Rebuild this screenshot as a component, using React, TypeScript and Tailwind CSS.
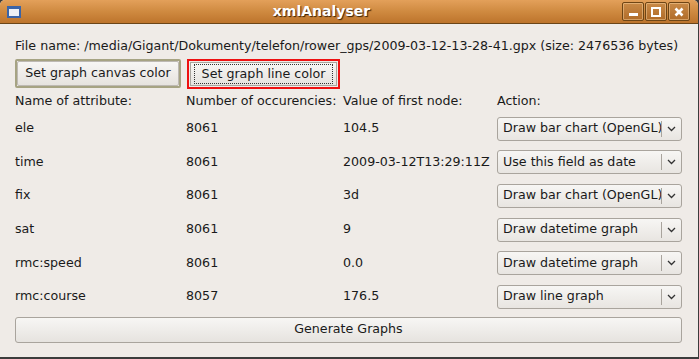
import React from "react";

const rows = [
  ["ele", "8061", "104.5", "Draw bar chart (OpenGL)"],
  ["time", "8061", "2009-03-12T13:29:11Z", "Use this field as date"],
  ["fix", "8061", "3d", "Draw bar chart (OpenGL)"],
  ["sat", "8061", "9", "Draw datetime graph"],
  ["rmc:speed", "8061", "0.0", "Draw datetime graph"],
  ["rmc:course", "8057", "176.5", "Draw line graph"],
];

function Combo({ label }: { label: string }) {
  return (
    <div className="flex h-[24px] w-[185px] items-center rounded-[3px] border border-[#a9a49d] bg-gradient-to-b from-[#f7f6f4] to-[#e8e5e1] text-[#1a1a1a]">
      <div className="flex-1 overflow-hidden whitespace-nowrap pl-[5px]">{label}</div>
      <div className="h-[16px] w-px bg-[#a9a49d]" />
      <div className="flex w-[19px] items-center justify-center">
        <svg width="9" height="6" viewBox="0 0 9 6">
          <path d="M1 1 L4.5 4.5 L8 1" fill="none" stroke="#333" strokeWidth="1.3" />
        </svg>
      </div>
    </div>
  );
}

function TitleButton({ children }: { children: React.ReactNode }) {
  return (
    <div className="flex h-[19px] w-[22px] items-center justify-center rounded-[2px] border border-[#6e4515] bg-gradient-to-b from-[#c98a47] to-[#b06c28] shadow-[inset_0_0_0_1px_rgba(255,220,170,0.45)]">
      {children}
    </div>
  );
}

export default function App() {
  return (
    <div
      className="h-[359px] w-[699px] overflow-hidden bg-[#3c3c3c] text-[12.65px]"
      style={{ fontFamily: '"DejaVu Sans", sans-serif' }}
    >
      <div className="flex h-[357px] w-[698px] flex-col overflow-hidden rounded-t-[5px] bg-[#efebe7]">
        {/* title bar */}
        <div className="relative flex h-[24px] items-center border-b border-[#6b4518] bg-gradient-to-b from-[#e3a05a] via-[#cf8a40] to-[#bd742c]">
          <div className="ml-[7px] h-[12px] w-[14px] border-2 border-t-[3px] border-[#3a64a8] bg-[#eef1f6]" />
          <div className="flex-1 text-center text-[14px] font-bold text-white [text-shadow:1px_1px_1px_#3a2208]">
            xmlAnalyser
          </div>
          <div className="mr-[8px] flex gap-[1px]">
            <TitleButton>
              <div className="mt-[6px] h-[3px] w-[9px] bg-white" />
            </TitleButton>
            <TitleButton>
              <div className="h-[10px] w-[10px] border-2 border-white" />
            </TitleButton>
            <TitleButton>
              <svg width="10" height="10" viewBox="0 0 10 10">
                <path d="M1.5 1.5 L8.5 8.5 M8.5 1.5 L1.5 8.5" stroke="white" strokeWidth="2.6" />
              </svg>
            </TitleButton>
          </div>
        </div>

        <div className="flex flex-1 flex-col pl-[15px] pr-[16px] text-[#1a1a1a]">
          <div className="mt-[13px] h-[17px] whitespace-nowrap leading-[17px]">
            File name: /media/Gigant/Dokumenty/telefon/rower_gps/2009-03-12-13-28-41.gpx (size: 2476536 bytes)
          </div>
          <div className="mt-[5px] flex gap-[6px]">
            <div className="h-[29px] w-[166px] rounded-[2px] border-2 border-[#a6a383] p-0">
              <div className="flex h-full items-center justify-center rounded-[2px] border border-[#bdb9b3] bg-gradient-to-b from-[#f7f6f4] to-[#e6e3df]">
                Set graph canvas color
              </div>
            </div>
            <div className="h-[30px] w-[153px] border-2 border-[#ee1111] p-px">
              <div className="flex h-full items-center justify-center border border-[#a9a49d] bg-gradient-to-b from-[#f7f6f4] to-[#e6e3df]">
                <div className="flex h-[20px] w-[139px] items-center justify-center border border-dotted border-[#333]">
                  Set graph line color
                </div>
              </div>
            </div>
          </div>

          <div className="mt-[3px] grid grid-cols-[171px_157px_154px_185px] items-center">
            <div className="h-[18px] leading-[18px]">Name of attribute:</div>
            <div>Number of occurencies:</div>
            <div>Value of first node:</div>
            <div>Action:</div>
          </div>

          <div className="mt-[1px] flex flex-col">
            {rows.map((r) => (
              <div
                key={r[0]}
                className="grid h-[33.6px] grid-cols-[171px_157px_154px_185px] items-center"
              >
                <div>{r[0]}</div>
                <div>{r[1]}</div>
                <div className="whitespace-nowrap">{r[2]}</div>
                <Combo label={r[3]} />
              </div>
            ))}
          </div>

          <div className="mt-[3px] flex h-[26px] w-[667px] items-center justify-center rounded-[3px] border border-[#a9a49d] bg-gradient-to-b from-[#f7f6f4] to-[#e6e3df]">
            Generate Graphs
          </div>
        </div>
      </div>
    </div>
  );
}
